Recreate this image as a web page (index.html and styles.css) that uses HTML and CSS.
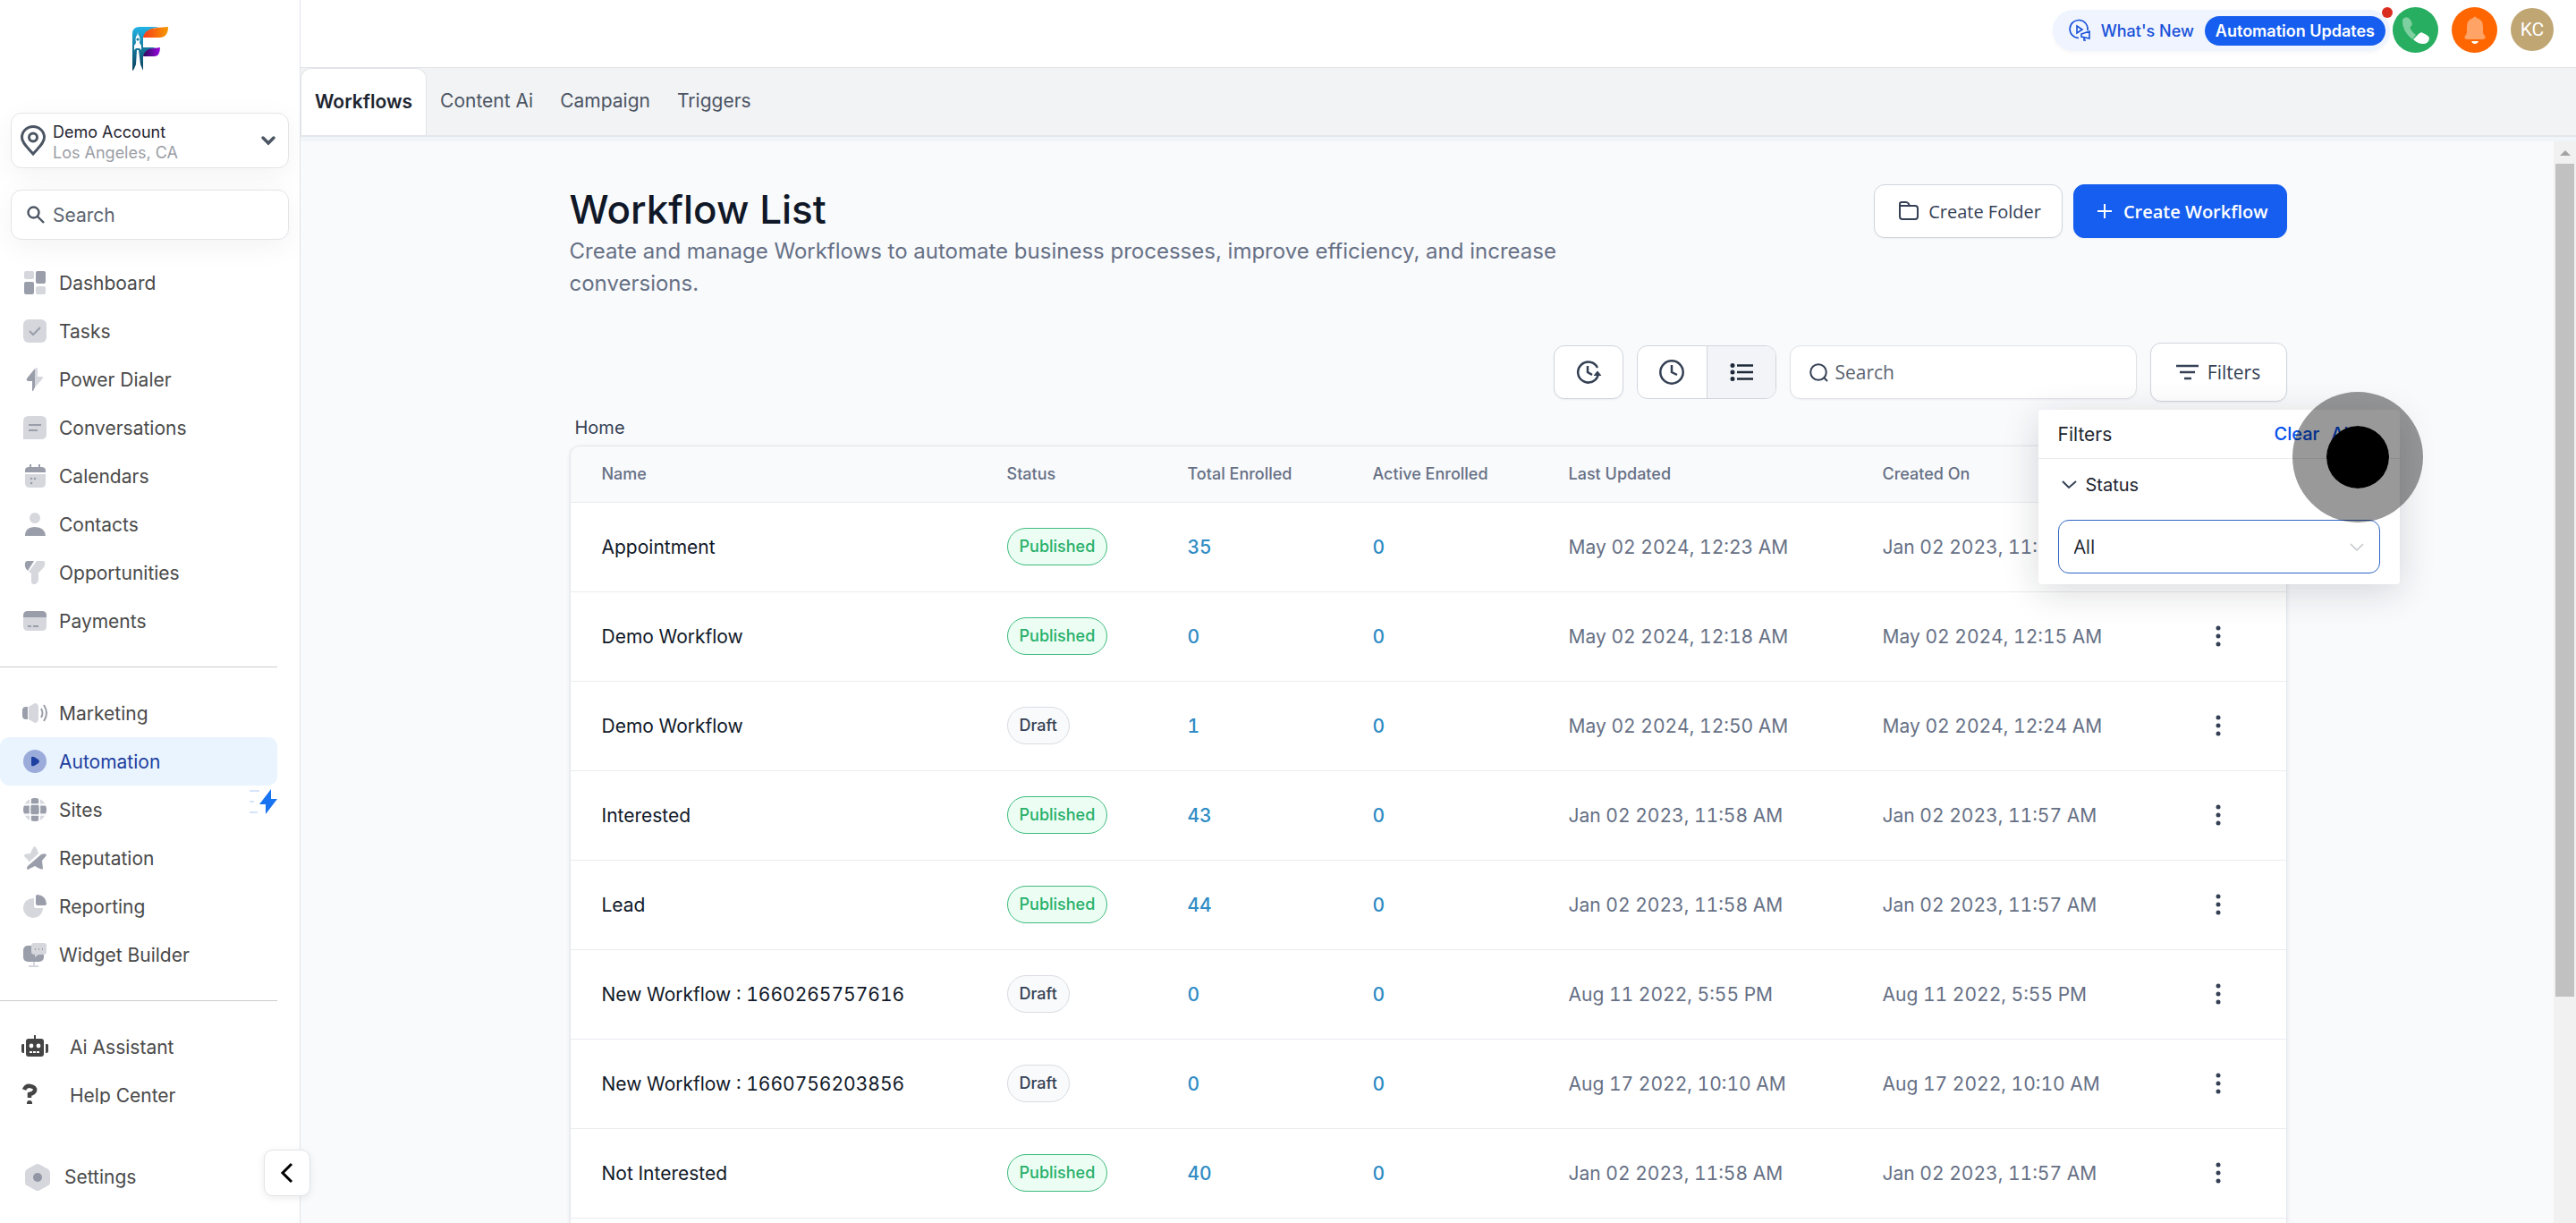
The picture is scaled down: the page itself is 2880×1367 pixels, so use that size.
FILE: index.html
```
<!DOCTYPE html>
<html lang="en">
<head>
    <meta charset="UTF-8">
    <meta name="viewport" content="width=device-width, initial-scale=1.0">
    <title>Workflow List</title>
    <link rel="stylesheet" href="styles.css">
</head>
<body>
    <aside class="sidebar">
        <a href="#" class="logo" aria-label="Home page">
            <svg width="40" height="50" viewBox="0 0 40 50">
                <defs>
                    <linearGradient id="stem" x1="0" y1="0" x2="0" y2="1">
                        <stop offset="0" stop-color="#22b4e6"/><stop offset="0.5" stop-color="#15789a"/><stop offset="1" stop-color="#0b3f5e"/>
                    </linearGradient>
                    <linearGradient id="flame" x1="0" y1="0" x2="1" y2="0">
                        <stop offset="0" stop-color="#fa3a1c"/><stop offset="1" stop-color="#f59a00"/>
                    </linearGradient>
                    <linearGradient id="violet" x1="0" y1="0" x2="1" y2="0">
                        <stop offset="0" stop-color="#2c0a5c"/><stop offset="1" stop-color="#9a06e0"/>
                    </linearGradient>
                </defs>
                <path fill="url(#stem)" d="M0 49V8Q0 0 8 0H30Q16 2 12 12V23H26Q16 26 12 33V49L7 44Z"/>
                <path fill="url(#flame)" d="M12 12Q14 2 28 1L40 0Q40 12 30 12Z"/>
                <path fill="url(#violet)" d="M12 33Q14 24 24 24L31 23Q31 33 24 33Z"/>
                <path fill="#fff" d="M6 6Q6 9 8 11Q9 14 8 18L10 21V26L8 24H4L2 26V21L4 18Q3 14 4 11Q6 9 6 6ZM5 26H7L9 42L12 49H1L4 42Z"/>
                <circle cx="6" cy="14" r="1.6" fill="#15789a"/>
            </svg>
        </a>

        <button class="box account">
            <svg width="28" height="34" viewBox="0 0 28 34" fill="none" stroke="#4b5563" stroke-width="3">
                <path d="M14 32C8 25 1.5 20 1.5 13.500a12.500 12 0 0 1 25 0C26.500 20 20 25 14 32Z"/>
                <circle cx="14" cy="13.500" r="4.500"/>
            </svg>
            <span class="account-text">
                <span class="account-name">Demo Account</span>
                <span class="account-city">Los Angeles, CA</span>
            </span>
            <svg width="16" height="10" viewBox="0 0 16 10" fill="none" stroke="#4b5563" stroke-width="3.500" stroke-linecap="round"><path d="M2 2l6 6 6-6"/></svg>
        </button>

        <label class="box side-search">
            <svg width="20" height="20" viewBox="0 0 20 20" fill="none" stroke="#4b5563" stroke-width="2.400"><circle cx="7.500" cy="7.500" r="6"/><path d="M12 12l7 7"/></svg>
            <input type="text" placeholder="Search" aria-label="Search menu">
        </label>

        <nav class="menu">
            <a href="#"><svg viewBox="0 0 26 26"><rect class="lt" x="1" width="11" height="9" rx="2"/><rect class="dk" x="14" width="11" height="14" rx="2"/><rect class="dk" x="1" y="12" width="11" height="14" rx="2"/><rect class="lt" x="14" y="17" width="11" height="9" rx="2"/></svg>Dashboard</a>
            <a href="#"><svg viewBox="0 0 26 26"><rect class="lt" width="26" height="26" rx="6"/><path class="ln" d="M7 13l4 4 8-8"/></svg>Tasks</a>
            <a href="#"><svg viewBox="0 0 26 26"><path class="dk" d="M13 1V22L11 26H10V15H5Q3 14 4 12Z"/><path class="lt" d="M13 1L16 0V10H21Q23 11 21 13L13 22Z"/></svg>Power Dialer</a>
            <a href="#"><svg viewBox="0 0 26 26"><path class="lt" d="M6 0H20Q26 0 26 6V20Q26 26 20 26H0V6Q0 0 6 0Z"/><path class="ln" d="M6 10H20M6 16H16"/></svg>Conversations</a>
            <a href="#"><svg viewBox="0 0 26 26"><path class="dk" d="M2 9V7Q2 3 6 3H7V0H9V3H17V0H19V3H20Q25 3 25 7V9Z"/><path class="lt" d="M2 11H25V21Q25 26 20 26H7Q2 26 2 21Z"/><circle class="dk" cx="9" cy="16" r="1.300"/><circle class="dk" cx="13" cy="16" r="1.300"/><circle class="dk" cx="9" cy="21" r="1.300"/></svg>Calendars</a>
            <a href="#"><svg viewBox="0 0 26 26"><circle class="lt" cx="13" cy="6" r="6"/><path class="dk" d="M2 26Q2 16 13 16T25 26Z"/></svg>Contacts</a>
            <a href="#"><svg viewBox="0 0 26 26"><path class="dk" d="M5 0H12L5 11Q1 7 2 3Q2 0 5 0Z"/><path class="lt" d="M15 0H22Q25 0 24 5Q23 8 17 13V21Q16 26 12 26Q9 26 9 23V14L6 12Z"/></svg>Opportunities</a>
            <a href="#"><svg viewBox="0 0 26 26"><path class="dk" d="M0 9V7Q0 2 5 2H21Q26 2 26 7V9Z"/><path class="lt" d="M0 9H26V19Q26 24 21 24H5Q0 24 0 19Z"/><path class="ln" d="M5 19H9M11 19H17"/></svg>Payments</a>
            <hr>
            <a href="#"><svg viewBox="0 0 26 26"><path class="dk" d="M5 6V20H3Q-1 20-1 16V10Q-1 6 3 6Z"/><path class="lt" d="M6 6L13 2Q17 2 17 7V19Q17 24 13 24L6 20Z"/><path class="ln" d="M20 8Q23 13 20 18M23 4Q29 13 23 22"/></svg>Marketing</a>
            <a href="#" class="active"><svg viewBox="0 0 26 26"><circle cx="13" cy="13" r="13" fill="#9cacda"/><path fill="#1e40a0" d="M9 9Q9 7 12 8Q18 11 18 13T12 18Q9 19 9 17Z"/></svg>Automation</a>
            <a href="#"><svg viewBox="0 0 26 26"><circle class="lt" cx="13" cy="13" r="13"/><path class="dk" d="M9 1Q13 -1 17 1V25Q13 27 9 25ZM1 9H25Q27 13 25 17H1Q-1 13 1 9Z"/><path d="M8 0Q7 13 8 26M18 0Q19 13 18 26M0 7H26M0 19H26" fill="none" stroke="#fff" stroke-width="1.500"/></svg>Sites
                <svg class="bolt" viewBox="0 0 31 28"><path d="M0 2H11M0 14H5M0 26H9" stroke="#d6e4fb" stroke-width="2"/><path fill="#1a73f0" d="M24 0V11H31L18 28V17H11Z"/></svg>
            </a>
            <a href="#"><svg viewBox="0 0 26 26"><path class="lt" d="M13 0Q15 1 17 8L6 18V16L1 11Q0 8 8 8Q11 0 13 0Z"/><path class="dk" d="M20 9Q26 7 26 10L21 16L22 25Q21 27 13 22L5 26Q3 25 5 22Z"/></svg>Reputation</a>
            <a href="#"><svg viewBox="0 0 26 26"><path class="lt" d="M12 4V13Q12 15 14 15H22A11 11 0 1 1 12 4Z"/><path class="dk" d="M14 2Q14 0 16 0Q25 1 26 10Q26 12 24 12H16Q14 12 14 10Z"/></svg>Reporting</a>
            <a href="#"><svg viewBox="0 0 26 26"><rect class="dk" y="3" width="23" height="18" rx="5"/><path d="M12 21V25M6 26H17" stroke="#d5d7dd" stroke-width="2"/><path class="lt" d="M12 0H23Q26 0 26 3V10Q26 13 23 13H17L13 16V13Q9 13 9 10V3Q9 0 12 0Z"/><path class="ln" d="M13 7H14M17 7H18M21 7H22"/></svg>Widget Builder</a>
            <hr>
            <a href="#" class="wide"><svg viewBox="0 0 30 26" fill="#444"><path d="M14 0H16V4H22Q25 4 25 7V21Q25 24 22 24H8Q5 24 5 21V7Q5 4 8 4H14ZM0 11Q0 10 2 10H3V20H2Q0 20 0 18ZM30 11Q30 10 28 10H27V20H28Q30 20 30 18Z"/><circle cx="11" cy="12" r="2.400" fill="#fff"/><circle cx="19" cy="12" r="2.400" fill="#fff"/><path d="M9 19H21" stroke="#fff" stroke-width="2" stroke-dasharray="3 1"/></svg>Ai Assistant</a>
            <a href="#" class="wide"><svg viewBox="0 0 30 26"><path d="M3 7Q5 2 10 3Q16 4 15 8Q14 11 9 12V16" fill="none" stroke="#444" stroke-width="4.500"/><circle cx="9" cy="22" r="3" fill="#444"/></svg>Help Center</a>
        </nav>

        <div class="sidebar-foot">
            <a href="#"><svg width="28" height="30" viewBox="0 0 28 30"><path fill="#d5d7dd" d="M11 1Q14-1 17 1L26 6Q28 8 28 10V20Q28 23 26 24L17 29Q14 31 11 29L2 24Q0 23 0 20V10Q0 8 2 6Z"/><circle cx="14" cy="15" r="5" fill="#9297a6"/></svg>Settings</a>
            <button class="collapse" aria-label="Collapse sidebar">
                <svg width="14" height="22" viewBox="0 0 14 22" fill="none" stroke="#000" stroke-width="3"><path d="M12 1L2 11L12 21"/></svg>
            </button>
        </div>
    </aside>

    <div class="page">
        <header class="topbar">
            <div class="news">
                <svg width="24" height="24" viewBox="0 0 24 24" fill="none" stroke="#1850d8" stroke-width="1.600"><path d="M11 20.500A10 10 0 1 1 21 12"/><path d="M9 7V15L15 11Z"/><path d="M14 16L23 13V21L14 19Z M17 20V23H19"/></svg>
                <a href="#">What's New</a>
                <button class="updates">Automation Updates</button>
                <span class="dot"></span>
            </div>
            <button class="round phone" aria-label="Phone">
                <svg width="32" height="32" viewBox="0 0 32 32"><path fill="#7fd0a0" d="M3 2Q6 0 9 3Q13 8 11 11Q8 12 11 16Q13 19 16 21L12 26Q0 16 1 4Z"/><path fill="#fff" d="M13 26L19 20Q22 17 24 19Q31 22 31 25Q30 31 24 31Q18 31 13 26Z"/></svg>
            </button>
            <button class="round bell" aria-label="Notifications">
                <svg width="24" height="32" viewBox="0 0 24 32"><path fill="#ffa366" d="M10 2Q12-1 14 2Q21 4 21 12V18Q21 20 23 22Q25 26 20 26H4Q-1 26 1 22Q3 20 3 18V12Q3 4 10 2Z"/><path fill="#fff" d="M8 28H16Q15 31 12 31T8 28Z"/></svg>
            </button>
            <button class="avatar">KC</button>
        </header>

        <nav class="tabs">
            <a href="#" class="current">Workflows</a>
            <a href="#">Content Ai</a>
            <a href="#">Campaign</a>
            <a href="#">Triggers</a>
        </nav>

        <div class="scroller">
            <main class="content">
                <div class="heading">
                    <div class="heading-text">
                        <h1>Workflow List</h1>
                        <p>Create and manage Workflows to automate business processes, improve efficiency, and increase conversions.</p>
                    </div>
                    <div class="actions">
                        <button class="btn folder">
                            <svg width="24" height="22" viewBox="0 0 24 22" fill="none" stroke="#344054" stroke-width="2"><path d="M2 6V3Q2 1 4 1H9Q11 1 12 3L13 6M2 5H19Q22 5 22 8V17Q22 20 19 20H5Q2 20 2 17Z"/></svg>
                            Create Folder
                        </button>
                        <button class="btn primary">
                            <svg width="18" height="18" viewBox="0 0 18 18" stroke="#fff" stroke-width="2"><path d="M9 1V17M1 9H17"/></svg>
                            Create Workflow
                        </button>
                    </div>
                </div>

                <div class="toolbar">
                    <button class="btn tool" aria-label="Recent">
                        <svg width="28" height="28" viewBox="0 0 28 28" fill="none" stroke="#344054" stroke-width="2.500"><path d="M24 9A11.500 11.500 0 1 0 25 16"/><path d="M13 7V14L18 17"/><path d="M20 18L24 13L28 18" fill="#344054" stroke-width="1"/></svg>
                    </button>
                    <div class="group">
                        <button aria-label="History"><svg width="28" height="28" viewBox="0 0 28 28" fill="none" stroke="#344054" stroke-width="2.500"><circle cx="14" cy="14" r="12.700"/><path d="M14 6V14L20 17"/></svg></button>
                        <button class="on" aria-label="List"><svg width="26" height="22" viewBox="0 0 26 22" fill="none" stroke="#1d2939" stroke-width="2.500"><path d="M8 3.500H26M8 11H26M8 18.500H26"/><path d="M3 3.500h0M3 11h0M3 18.500h0" stroke-width="5" stroke-linecap="round"/></svg></button>
                    </div>
                    <label class="find">
                        <svg width="21" height="21" viewBox="0 0 21 21" fill="none" stroke="#344054" stroke-width="2"><circle cx="10" cy="10" r="8.800"/><path d="M16 16l4 4"/></svg>
                        <input type="text" placeholder="Search" aria-label="Search workflows">
                    </label>
                    <div class="filter">
                        <button class="btn filter-btn">
                            <svg width="25" height="18" viewBox="0 0 25 18" stroke="#344054" stroke-width="2.500"><path d="M0 2H25M4 9H21M9 16H17"/></svg>
                            Filters
                        </button>
                        <div class="popover">
                            <div class="popover-head">
                                <span>Filters</span>
                                <button class="clear"><span>Clear</span><span>All</span></button>
                            </div>
                            <label class="popover-label" for="status">
                                <svg width="17" height="10" viewBox="0 0 17 10" fill="none" stroke="#344054" stroke-width="2"><path d="M1 1l7 7 8-7"/></svg>
                                Status
                            </label>
                            <div class="select">
                                <select id="status"><option>All</option><option>Published</option><option>Draft</option></select>
                                <svg width="16" height="9" viewBox="0 0 16 9" fill="none" stroke="#c2c5cc" stroke-width="1.500"><path d="M1 1l7 7 7-7"/></svg>
                            </div>
                            <span class="click"></span>
                        </div>
                    </div>
                </div>

                <a href="#" class="crumb">Home</a>

                <div class="card">
                    <table>
                        <colgroup>
                            <col>
                            <col class="c-status">
                            <col class="c-total">
                            <col class="c-active">
                            <col class="c-date">
                            <col class="c-date">
                            <col class="c-menu">
                        </colgroup>
                        <thead>
                            <tr><th>Name</th><th>Status</th><th>Total Enrolled</th><th>Active Enrolled</th><th>Last Updated</th><th>Created On</th><th></th></tr>
                        </thead>
                        <tbody id="rows"></tbody>
                    </table>
                </div>
            </main>
            <div class="track">
                <span class="arrow"></span>
                <span class="thumb"></span>
            </div>
        </div>
    </div>

    <script>
        const workflows = [
            ['Appointment', 'Published', 35, 0, 'May 02 2024, 12:23 AM', 'Jan 02 2023, 11:57 AM'],
            ['Demo Workflow', 'Published', 0, 0, 'May 02 2024, 12:18 AM', 'May 02 2024, 12:15 AM'],
            ['Demo Workflow', 'Draft', 1, 0, 'May 02 2024, 12:50 AM', 'May 02 2024, 12:24 AM'],
            ['Interested', 'Published', 43, 0, 'Jan 02 2023, 11:58 AM', 'Jan 02 2023, 11:57 AM'],
            ['Lead', 'Published', 44, 0, 'Jan 02 2023, 11:58 AM', 'Jan 02 2023, 11:57 AM'],
            ['New Workflow : 1660265757616', 'Draft', 0, 0, 'Aug 11 2022, 5:55 PM', 'Aug 11 2022, 5:55 PM'],
            ['New Workflow : 1660756203856', 'Draft', 0, 0, 'Aug 17 2022, 10:10 AM', 'Aug 17 2022, 10:10 AM'],
            ['Not Interested', 'Published', 40, 0, 'Jan 02 2023, 11:58 AM', 'Jan 02 2023, 11:57 AM']
        ];

        // Render one table row per workflow
        document.getElementById('rows').innerHTML = workflows.map(([name, status, total, active, updated, created]) => `
            <tr>
                <td class="name">${name}</td>
                <td><span class="badge ${status.toLowerCase()}">${status}</span></td>
                <td><a href="#">${total}</a></td>
                <td><a href="#">${active}</a></td>
                <td>${updated}</td>
                <td>${created}</td>
                <td><button class="more" aria-label="More"><svg width="6" height="24" viewBox="0 0 6 24" fill="#344054"><circle cx="3" cy="3" r="2.500"/><circle cx="3" cy="12" r="2.500"/><circle cx="3" cy="21" r="2.500"/></svg></button></td>
            </tr>`).join('');
    </script>
</body>
</html>
```
FILE: styles.css
```
* {
    box-sizing: border-box;
}
body {
    display: flex;
    height: 100vh;
    margin: 0;
    overflow: hidden;
    font-family: Inter, sans-serif;
    font-size: 21px;
    color: #4a4a4a;
    background: #fff;
}
a {
    color: inherit;
    text-decoration: none;
}
button, input, select {
    margin: 0;
    padding: 0;
    border: 0;
    background: none;
    font: inherit;
    color: inherit;
}
svg {
    flex: none;
    overflow: visible;
}

/* Sidebar */
.sidebar {
    display: flex;
    flex-direction: column;
    flex: none;
    width: 336px;
    border-right: 1px solid #e2e4e8;
}
.logo {
    margin: 30px 0 46px;
    height: 50px;
    text-align: center;
}
.box {
    display: flex;
    align-items: center;
    margin: 0 12px 24px;
    border: 1px solid #e2e4e8;
    border-radius: 12px;
    background: #fff;
    box-shadow: 0 8px 32px rgba(0, 0, 0, 0.05);
}
.account {
    height: 62px;
    padding: 0 14px 0 10px;
    text-align: left;
}
.account-text {
    flex: 1;
    margin-left: 8px;
    padding-top: 3px;
    font-size: 18px;
    line-height: 23px;
}
.account-text span {
    display: block;
}
.account-name {
    color: #1f2430;
}
.account-city {
    color: #9a9da5;
}
.side-search {
    height: 56px;
    margin-bottom: 21px;
    padding: 0 17px;
    gap: 9px;
}
.side-search input {
    width: 100%;
    outline: 0;
}
::placeholder {
    color: #5b6370;
    opacity: 1;
}
.menu {
    flex: 1;
    min-height: 0;
    overflow: hidden;
}
.menu a {
    display: flex;
    align-items: center;
    height: 54px;
    margin-right: 25px;
    padding-left: 26px;
    gap: 14px;
    border-radius: 10px;
}
.menu a svg {
    width: 26px;
    height: 26px;
}
.menu a.active {
    background: #e9f4ff;
    color: #1e3f9e;
}
.menu a.wide {
    padding-left: 24px;
    gap: 24px;
}
.menu a.wide svg {
    width: 30px;
}
.menu a .bolt {
    width: 31px;
    height: 28px;
    margin: 0 0 18px auto;
}
.menu hr {
    margin: 24px 25px 24px 0;
    border: 0;
    border-top: 1px solid #cbcdd1;
}
.lt {
    fill: #d5d7dd;
}
.dk {
    fill: #9a9eaa;
}
.ln {
    fill: none;
    stroke: #9a9eaa;
    stroke-width: 2;
}
.sidebar-foot {
    display: flex;
    align-items: center;
    justify-content: space-between;
    flex: none;
    height: 133px;
    padding: 20px 0 0 28px;
}
.sidebar-foot a {
    display: flex;
    align-items: center;
    gap: 16px;
    padding-top: 10px;
}
.collapse {
    display: flex;
    align-items: center;
    justify-content: center;
    position: relative;
    z-index: 2;
    width: 52px;
    height: 52px;
    margin-right: -12px;
    border: 1px solid #e2e4e8;
    border-radius: 10px;
    background: #fff;
    box-shadow: 0 2px 8px rgba(0, 0, 0, 0.08);
}

/* Top bar */
.page {
    display: flex;
    flex-direction: column;
    flex: 1;
    min-width: 0;
}
.topbar {
    display: flex;
    align-items: flex-start;
    justify-content: flex-end;
    flex: none;
    height: 76px;
    padding: 8px 25px 0 0;
    gap: 15px;
    border-bottom: 1px solid #e2e4e8;
}
.news {
    display: flex;
    align-items: center;
    position: relative;
    height: 46px;
    margin: 3px -12px 0 0;
    padding: 0 5px 0 18px;
    gap: 12px;
    border-radius: 23px;
    background: #eff4ff;
    box-shadow: 0 2px 4px rgba(0, 0, 0, 0.04);
    font-size: 18px;
    font-weight: 500;
    color: #1850d8;
}
.updates {
    height: 33px;
    padding: 0 12px;
    border-radius: 17px;
    background: #155eef;
    font-weight: 600;
    color: #fff;
}
.dot {
    position: absolute;
    top: -3px;
    right: -3px;
    width: 12px;
    height: 12px;
    border-radius: 50%;
    background: #d92d20;
}
.round {
    display: flex;
    align-items: center;
    justify-content: center;
    width: 51px;
    height: 51px;
    border-radius: 50%;
}
.phone {
    background: #27ae60;
}
.bell {
    background: #ff6600;
}
.avatar {
    width: 48px;
    height: 48px;
    margin-top: 1px;
    border-radius: 50%;
    background: #bfa673;
    font-family: Roboto, sans-serif;
    color: #fff;
}

/* Tabs */
.tabs {
    display: flex;
    flex: none;
    height: 77px;
    border-bottom: 2px solid #e3e6ea;
    background: #f2f3f5;
    color: #4b5563;
}
.tabs a {
    display: flex;
    align-items: center;
    padding: 0 15px 2px;
}
.tabs .current {
    border: 1px solid #e2e4e8;
    border-bottom: 0;
    border-radius: 12px 12px 0 0;
    background: #fff;
    font-weight: 600;
    color: #1d2530;
}

/* Page content */
.scroller {
    display: flex;
    flex: 1;
    min-height: 0;
    padding-left: 2px;
    border-top: 5px solid #eff5f8;
    background: #f9fafc;
}
.content {
    display: flex;
    flex-direction: column;
    flex: 1;
    max-width: 1920px;
    margin: 0 auto;
    padding-top: 48px;
}
.heading {
    display: flex;
    justify-content: space-between;
    align-items: flex-start;
}
.heading-text {
    max-width: 1152px;
}
h1 {
    margin: 0;
    font-size: 44px;
    font-weight: 500;
    line-height: 57px;
    color: #101828;
}
p {
    margin: 0;
    font-size: 24px;
    line-height: 36px;
    color: #667085;
}
.actions {
    display: flex;
    gap: 12px;
}
.btn {
    display: flex;
    align-items: center;
    justify-content: center;
    height: 60px;
    border: 1px solid #d0d5dd;
    border-radius: 12px;
    background: #fff;
    box-shadow: 0 1px 2px rgba(16, 24, 40, 0.05);
    font-family: "Open Sans", sans-serif;
    font-size: 20px;
    font-weight: 500;
    color: #344054;
}
.folder {
    padding: 0 23px 0 26px;
    gap: 10px;
}
.primary {
    padding: 0 20px 0 25px;
    gap: 12px;
    border-color: #155eef;
    background: #155eef;
    font-weight: 600;
    color: #fff;
}
.toolbar {
    display: flex;
    align-items: center;
    justify-content: flex-end;
    margin-top: 48px;
    gap: 15px;
}
.tool {
    width: 78px;
}
.group {
    display: flex;
    height: 60px;
    overflow: hidden;
    border: 1px solid #d0d5dd;
    border-radius: 12px;
    background: #fff;
}
.group button {
    display: flex;
    align-items: center;
    justify-content: center;
    width: 77px;
}
.group .on {
    border-left: 1px solid #d0d5dd;
    background: #f2f4f7;
}
.find {
    display: flex;
    align-items: center;
    width: 388px;
    height: 60px;
    padding: 0 21px;
    gap: 8px;
    border: 1px solid #dfe2e7;
    border-radius: 12px;
    background: #fff;
    box-shadow: 0 1px 2px rgba(16, 24, 40, 0.05);
    font-family: "Open Sans", sans-serif;
}
.find input {
    width: 100%;
    outline: 0;
}
.filter {
    position: relative;
}
.filter-btn {
    width: 153px;
    height: 66px;
    gap: 10px;
    font-size: 21px;
}

/* Filter menu, lies over the table */
.popover {
    position: absolute;
    top: 75px;
    right: -126px;
    z-index: 3;
    width: 404px;
    height: 195px;
    border-radius: 4px;
    background: #fff;
    box-shadow: 0 8px 40px rgba(16, 24, 40, 0.16);
    color: #1d2530;
}
.popover-head {
    display: flex;
    align-items: center;
    justify-content: space-between;
    height: 55px;
    padding: 0 22px;
    border-bottom: 1px solid #eaecf0;
}
.clear {
    display: flex;
    gap: 13px;
    padding-right: 30px;
    font-size: 20px;
    font-weight: 500;
    color: #004eeb;
}
.popover-label {
    display: flex;
    align-items: center;
    height: 58px;
    padding-left: 26px;
    gap: 10px;
    font-size: 20px;
}
.select {
    display: flex;
    align-items: center;
    margin: 10px 22px 0;
}
.select select {
    flex: 1;
    height: 60px;
    padding-left: 17px;
    border: 1px solid #2f66c4;
    border-radius: 12px;
    appearance: none;
    font-family: "Open Sans", sans-serif;
}
.select svg {
    margin: 0 18px 0 -34px;
    pointer-events: none;
}
/* click highlight around the pointer */
.click {
    position: absolute;
    top: -20px;
    left: 284px;
    width: 146px;
    height: 146px;
    border: 38px solid rgba(0, 0, 0, 0.4);
    border-radius: 50%;
    background: #000;
    background-clip: padding-box;
}

/* Workflow table */
.crumb {
    height: 49px;
    padding: 0 6px;
    font-size: 20px;
    line-height: 58px;
    color: #344054;
}
.card {
    flex: 1;
    min-height: 0;
    overflow: hidden;
    border: 1px solid #e4e7ec;
    border-bottom: 0;
    border-radius: 12px 12px 0 0;
    background: #fff;
    box-shadow: 0 1px 4px rgba(16, 24, 40, 0.1);
}
table {
    width: 100%;
    table-layout: fixed;
    border-collapse: collapse;
    font-variant-numeric: tabular-nums;
    color: #667085;
}
.c-status {
    width: 202px;
}
.c-total {
    width: 207px;
}
.c-active {
    width: 219px;
}
.c-date {
    width: 351px;
}
.c-menu {
    width: 100px;
}
th, td {
    padding: 0;
    border-bottom: 1px solid #eaecf0;
    text-align: left;
    font-weight: 400;
}
th {
    height: 62px;
    background: #f9fafc;
    font-size: 18px;
    font-weight: 500;
}
td {
    height: 100px;
}
th:first-child, td:first-child {
    padding-left: 35px;
}
td a {
    font-weight: 500;
    color: #2f8cc5;
}
.name {
    color: #101828;
}
.badge {
    display: inline-block;
    padding: 0 13px;
    border: 1px solid #d9dce3;
    border-radius: 21px;
    background: #f9fafb;
    font-size: 18px;
    font-weight: 500;
    line-height: 40px;
    vertical-align: middle;
    color: #344054;
}
.badge.published {
    border-color: #3dbb7e;
    background: #ecfdf3;
    color: #27b06a;
}
.more {
    display: flex;
    padding: 8px 21px;
}

/* Scrollbar */
.track {
    display: flex;
    flex-direction: column;
    align-items: center;
    flex: none;
    width: 25px;
    background: #f1f1f1;
}
.arrow {
    margin: 10px 0 9px;
    border: 6px solid transparent;
    border-top: 0;
    border-bottom-color: #a3a3a3;
}
.thumb {
    width: 21px;
    height: 77%;
    background: #c1c1c1;
}
```
